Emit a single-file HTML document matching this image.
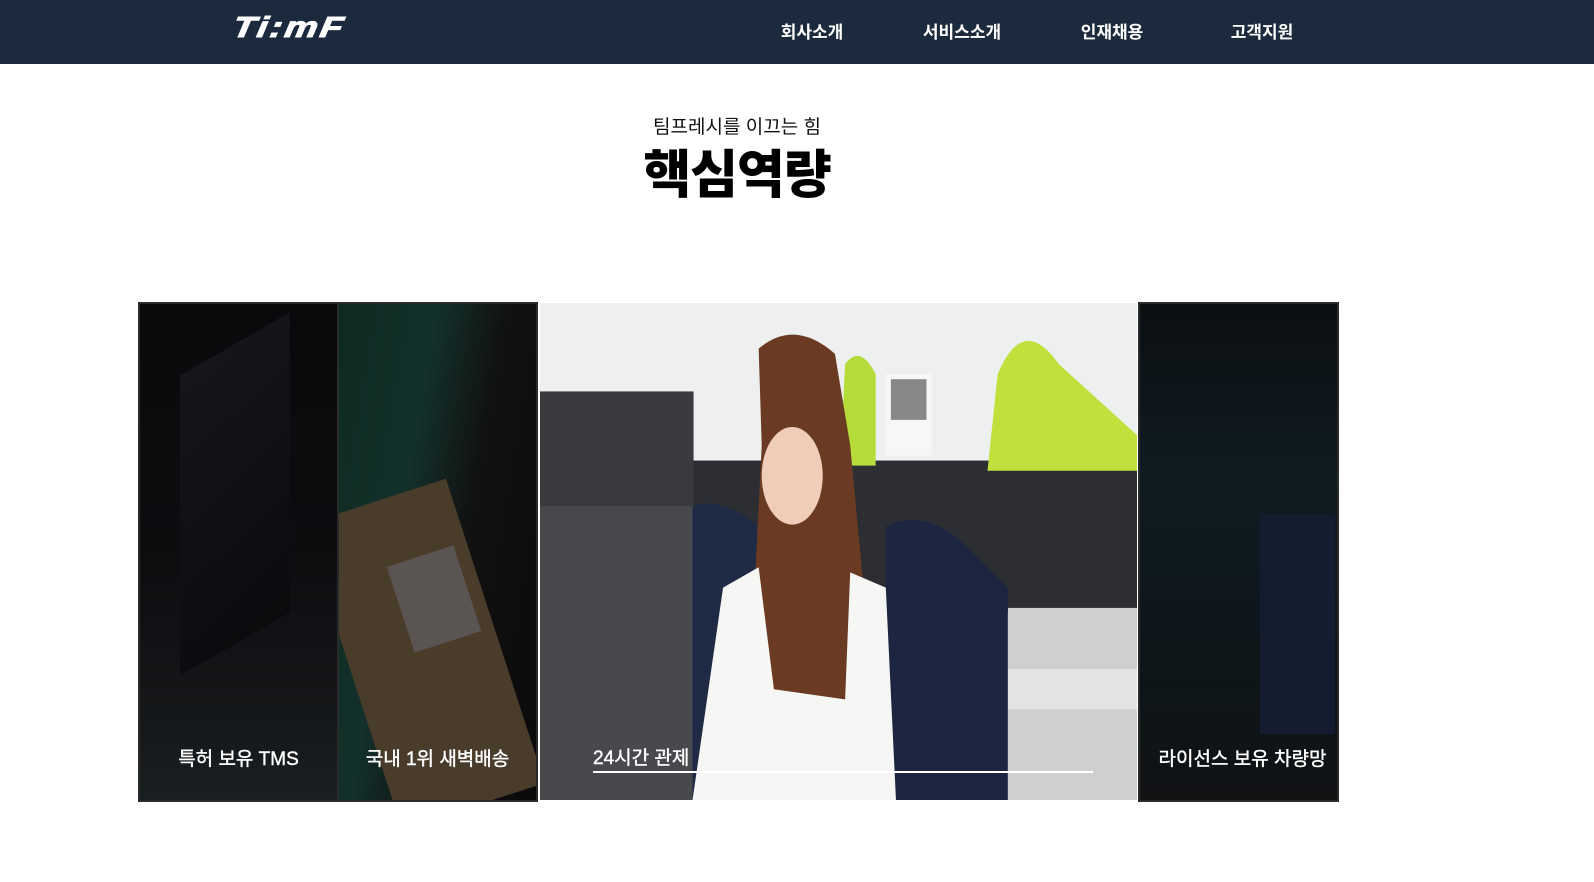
<!DOCTYPE html>
<html><head><meta charset="utf-8"><style>
*{margin:0;padding:0;box-sizing:border-box}
body{width:1594px;height:882px;background:#fff;font-family:"Liberation Sans","Noto Sans CJK KR",sans-serif;position:relative;overflow:hidden}
.hd{position:absolute;left:0;top:0;width:1594px;height:64px;background:#1b2a3c}
.logo{position:absolute;left:233px;top:12px;color:#fff;font:italic 900 29px "Liberation Sans",sans-serif;letter-spacing:2px;transform:skewX(-10deg) scaleX(1.27);transform-origin:left;-webkit-text-stroke:1px #fff}
.nav{position:absolute;top:18px;color:#fff;font-size:17px;font-weight:700;transform:translateX(-50%)}
.sub{position:absolute;left:737px;top:112px;transform:translateX(-50%);font-size:19px;color:#111}
.ttl{position:absolute;left:737px;top:133px;transform:translateX(-50%);font-size:52px;font-weight:900;color:#000;letter-spacing:-1px}
.p{position:absolute;top:302px;height:500px;border:2px solid #2a2a2a;overflow:hidden}
.lb{position:absolute;top:444px;left:0;right:0;text-align:center;color:#fff;font-size:19px;line-height:24px;font-weight:400;-webkit-text-stroke:0.4px #fff}
</style></head><body>
<div class="hd">
<div class="logo">Ti:mF</div>
<div class="nav" style="left:812px">회사소개</div>
<div class="nav" style="left:962px">서비스소개</div>
<div class="nav" style="left:1112px">인재채용</div>
<div class="nav" style="left:1262px">고객지원</div>
</div>
<div class="sub">팀프레시를 이끄는 힘</div>
<div class="ttl">핵심역량</div>

<div class="p" style="left:138px;width:201px;background:linear-gradient(180deg,#0a0a0c 0%,#0d0d10 50%,#141618 80%,#1a1f22 100%)">
<div style="position:absolute;left:40px;top:40px;width:110px;height:300px;background:linear-gradient(160deg,#15161c,#0b0b0e);transform:skewY(-30deg)"></div>
<div class="lb">특허 보유 TMS</div></div>
<div class="p" style="left:337px;width:201px;background:linear-gradient(100deg,#0e2a22 0%,#13302a 35%,#111 60%,#0a0a0c 100%)">
<div style="position:absolute;left:10px;top:190px;width:150px;height:320px;background:#4a3c2a;transform:rotate(-18deg)"></div>
<div style="position:absolute;left:60px;top:250px;width:70px;height:90px;background:#5a5552;transform:rotate(-18deg)"></div>
<div class="lb">국내 1위 새벽배송</div></div>

<div style="position:absolute;left:540px;top:303px;width:597px;height:497px;overflow:hidden;background:#eceeee">
<svg width="597" height="497" viewBox="0 0 587 489" preserveAspectRatio="none">
<rect x="0" y="0" width="587" height="489" fill="#eef0f0"/>
<rect x="150" y="155" width="437" height="150" fill="#2c2e33"/>
<rect x="460" y="300" width="127" height="189" fill="#cfcfcf"/>
<rect x="460" y="360" width="127" height="40" fill="#e3e3e3"/>
<path d="M295 160 L300 60 Q315 40 330 70 L330 160Z" fill="#b5dc3a"/>
<path d="M440 165 L450 70 Q475 10 510 60 L587 130 L587 165Z" fill="#c2e03c"/>
<rect x="340" y="70" width="45" height="80" fill="#f7f7f7"/>
<rect x="345" y="75" width="35" height="40" fill="#888"/>
<rect x="0" y="87" width="151" height="402" fill="#3a3b3e"/>
<rect x="0" y="200" width="151" height="289" fill="#48494c"/>
<path d="M150 200 Q180 190 215 220 L215 489 L150 489Z" fill="#1f2a44"/>
<path d="M340 220 Q380 200 420 240 L460 280 L460 489 L340 489Z" fill="#1c2640"/>
<path d="M215 45 Q250 15 290 50 L305 140 L320 300 L300 400 L230 390 L210 300 L218 140Z" fill="#6b3a22"/>
<ellipse cx="248" cy="170" rx="30" ry="48" fill="#f0cdb8"/>
<path d="M180 280 L215 260 L230 380 L300 390 L305 265 L340 280 L350 489 L150 489Z" fill="#f6f6f4"/>
</svg>
<div style="position:absolute;left:53px;top:440px;color:#fff;font-size:19px;-webkit-text-stroke:0.4px #fff">24시간 관제</div>
<div style="position:absolute;left:53px;top:468px;width:500px;height:2px;background:#fff"></div>
</div>

<div class="p" style="left:1138px;width:201px;background:linear-gradient(180deg,#0c0f12 0%,#0f1c22 35%,#0e161a 70%,#101214 100%)">
<div style="position:absolute;left:120px;top:210px;width:75px;height:220px;background:#141d30"></div>
<div class="lb" style="left:8px">라이선스 보유 차량망</div></div>
</body></html>
